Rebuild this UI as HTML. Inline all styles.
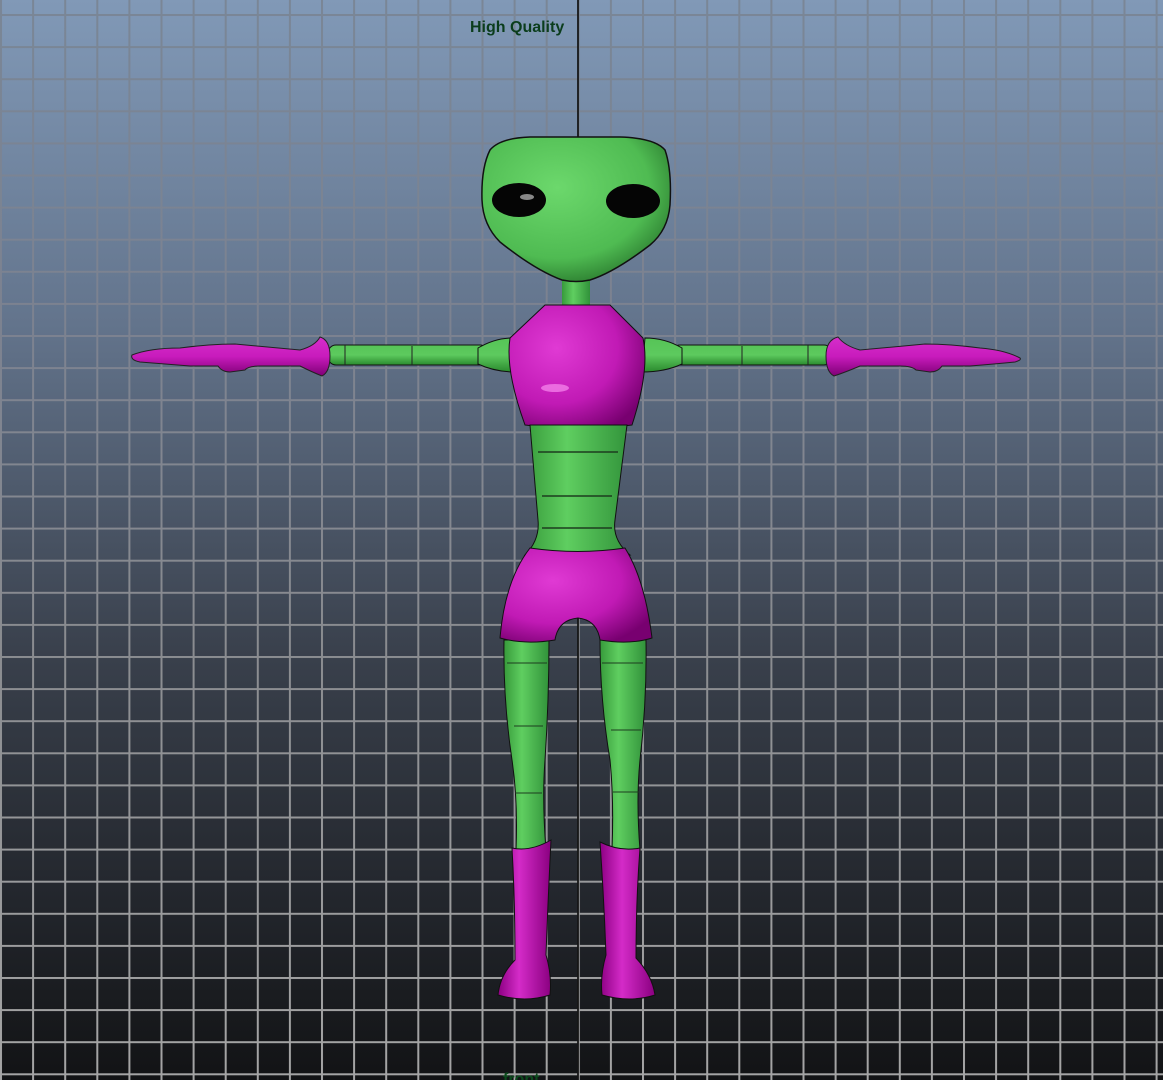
<!DOCTYPE html>
<html><head><meta charset="utf-8"><style>
html,body{margin:0;padding:0;width:1163px;height:1080px;overflow:hidden;background:#000}
svg{display:block}
</style></head><body>
<svg width="1163" height="1080" viewBox="0 0 1163 1080" xmlns="http://www.w3.org/2000/svg">
<defs>
<linearGradient id="bg" x1="0" y1="0" x2="0" y2="1">
<stop offset="0" stop-color="#8199b7"/>
<stop offset="0.3" stop-color="#63748c"/>
<stop offset="0.6" stop-color="#3a414d"/>
<stop offset="1" stop-color="#121315"/>
</linearGradient>
<linearGradient id="gl" x1="0" y1="0" x2="0" y2="1">
<stop offset="0" stop-color="#7a8696"/>
<stop offset="0.3" stop-color="#7c8290"/>
<stop offset="0.6" stop-color="#8a8c90"/>
<stop offset="1" stop-color="#a5a5a5"/>
</linearGradient>
<pattern id="grid" x="0" y="14" width="32.1" height="32.1" patternUnits="userSpaceOnUse">
<rect x="0" y="0" width="2" height="32.1" fill="#fff"/>
<rect x="0" y="0" width="32.1" height="2" fill="#fff"/>
</pattern>
<mask id="gm"><rect width="1163" height="1080" fill="url(#grid)"/></mask>
<radialGradient id="gr" cx="0.4" cy="0.35" r="0.7">
<stop offset="0" stop-color="#6cd86c"/><stop offset="0.7" stop-color="#4fbb52"/><stop offset="1" stop-color="#2a7a2e"/>
</radialGradient>
<radialGradient id="mg" cx="0.35" cy="0.35" r="0.75">
<stop offset="0" stop-color="#e03ad4"/><stop offset="0.6" stop-color="#c11ab5"/><stop offset="1" stop-color="#780070"/>
</radialGradient>
<linearGradient id="grh" x1="0" y1="0" x2="0" y2="1">
<stop offset="0" stop-color="#56c457"/><stop offset="0.5" stop-color="#5dca5e"/><stop offset="1" stop-color="#2a8a2e"/>
</linearGradient>
<linearGradient id="grv" x1="0" y1="0" x2="1" y2="0">
<stop offset="0" stop-color="#379a3b"/><stop offset="0.4" stop-color="#5fce60"/><stop offset="1" stop-color="#31923a"/>
</linearGradient>
<linearGradient id="mgh" x1="0" y1="0" x2="0" y2="1">
<stop offset="0" stop-color="#d62ecb"/><stop offset="0.5" stop-color="#c81bbc"/><stop offset="1" stop-color="#7e0075"/>
</linearGradient>
<linearGradient id="mgv" x1="0" y1="0" x2="1" y2="0">
<stop offset="0" stop-color="#8c0082"/><stop offset="0.4" stop-color="#d42bc8"/><stop offset="1" stop-color="#8a0080"/>
</linearGradient>
</defs>
<rect width="1163" height="1080" fill="url(#bg)"/>
<rect width="1163" height="1080" fill="url(#gl)" mask="url(#gm)"/>
<rect x="577" y="0" width="2" height="1080" fill="#111" opacity="0.85"/>
<text x="470" y="32" font-family="Liberation Sans, sans-serif" font-weight="bold" font-size="16" fill="#0b3d1c">High Quality</text>
<text x="503" y="1084" font-family="Liberation Sans, sans-serif" font-weight="bold" font-size="16" fill="#0b4a1c">front</text>

<rect x="328" y="345" width="160" height="20" rx="8" fill="url(#grh)" stroke="#111" stroke-width="1"/>
<line x1="345" y1="345" x2="345" y2="365" stroke="#222"/>
<line x1="412" y1="346" x2="412" y2="365" stroke="#222"/>
<rect x="672" y="345" width="160" height="20" rx="8" fill="url(#grh)" stroke="#111" stroke-width="1"/>
<line x1="742" y1="346" x2="742" y2="365" stroke="#222"/>
<line x1="808" y1="345" x2="808" y2="365" stroke="#222"/>
<path d="M478 348 Q495 338 512 338 L516 372 Q495 372 478 364 Z" fill="url(#grh)" stroke="#111"/>
<path d="M682 348 Q665 338 645 338 L642 372 Q665 372 682 364 Z" fill="url(#grh)" stroke="#111"/>
<path d="M132 355 Q150 348 180 348 Q210 344 235 344 L300 350 Q315 346 320 337 Q330 340 330 356 Q330 372 322 376 Q312 372 300 366 L260 366 Q248 366 245 370 L230 372 Q222 372 218 366 L190 366 Q165 364 140 362 Q130 360 132 355 Z" fill="url(#mgh)" stroke="#222" stroke-width="1"/>
<path d="M1020 358 Q1005 350 980 348 Q950 344 925 344 L860 350 Q845 346 838 337 Q826 340 826 356 Q826 372 834 376 Q846 372 860 366 L900 366 Q912 366 916 370 L930 372 Q938 372 942 366 L970 366 Q995 364 1015 362 Q1022 360 1020 358 Z" fill="url(#mgh)" stroke="#222" stroke-width="1"/>

<rect x="562" y="275" width="28" height="35" fill="url(#grv)"/>
<path d="M490 150 Q500 138 530 137 L620 137 Q655 138 665 150 Q672 170 670 205 Q668 230 650 245 Q615 272 590 280 Q576 283 562 280 Q535 270 500 242 Q483 225 482 200 Q481 168 490 150 Z" fill="url(#gr)" stroke="#111" stroke-width="1.5"/>
<ellipse cx="519" cy="200" rx="27" ry="17" fill="#050505"/>
<ellipse cx="633" cy="201" rx="27" ry="17" fill="#050505"/>
<ellipse cx="527" cy="197" rx="7" ry="3" fill="#888"/>
<path d="M545 305 L610 305 L643 338 Q650 370 632 425 Q578 432 525 425 Q505 370 510 338 Z" fill="url(#mg)" stroke="#111"/>
<ellipse cx="555" cy="388" rx="14" ry="4" fill="#f27ee8" opacity="0.8"/>
<path d="M530 425 L627 425 L615 520 Q612 540 630 555 L525 555 Q540 540 538 520 Z" fill="url(#grv)" stroke="#111"/>
<line x1="538" y1="452" x2="618" y2="452" stroke="#1d3d1f" stroke-width="1.5"/>
<line x1="542" y1="496" x2="612" y2="496" stroke="#1d3d1f" stroke-width="1.5"/>
<line x1="542" y1="528" x2="612" y2="528" stroke="#1d3d1f" stroke-width="1.5"/>
<path d="M504 640 L549 640 Q549 700 545 760 Q542 800 546 850 L516 850 Q518 800 512 760 Q503 700 504 640 Z" fill="url(#grv)" stroke="#111"/>
<path d="M600 640 L646 640 Q647 700 640 760 Q636 800 640 850 L612 850 Q614 800 610 760 Q600 700 600 640 Z" fill="url(#grv)" stroke="#111"/>
<line x1="507" y1="663" x2="547" y2="663" stroke="#1d3d1f"/>
<line x1="602" y1="663" x2="643" y2="663" stroke="#1d3d1f"/>
<line x1="514" y1="726" x2="543" y2="726" stroke="#1d3d1f"/>
<line x1="611" y1="730" x2="641" y2="730" stroke="#1d3d1f"/>
<line x1="515" y1="793" x2="542" y2="793" stroke="#1d3d1f"/>
<line x1="613" y1="792" x2="639" y2="792" stroke="#1d3d1f"/>
<path d="M530 548 Q578 555 625 548 Q645 580 652 638 Q630 645 600 640 Q597 620 578 618 Q558 620 555 640 Q525 645 500 638 Q505 580 530 548 Z" fill="url(#mg)" stroke="#111"/>
<path d="M512 848 Q530 852 551 840 Q548 900 546 955 Q552 975 550 995 Q525 1003 498 995 Q500 975 515 960 Q515 900 512 848 Z" fill="url(#mgv)" stroke="#111"/>
<path d="M600 842 Q620 852 640 848 Q636 900 636 958 Q652 975 655 995 Q630 1003 602 995 Q600 975 606 955 Q604 900 600 842 Z" fill="url(#mgv)" stroke="#111"/>
</svg>
</body></html>
